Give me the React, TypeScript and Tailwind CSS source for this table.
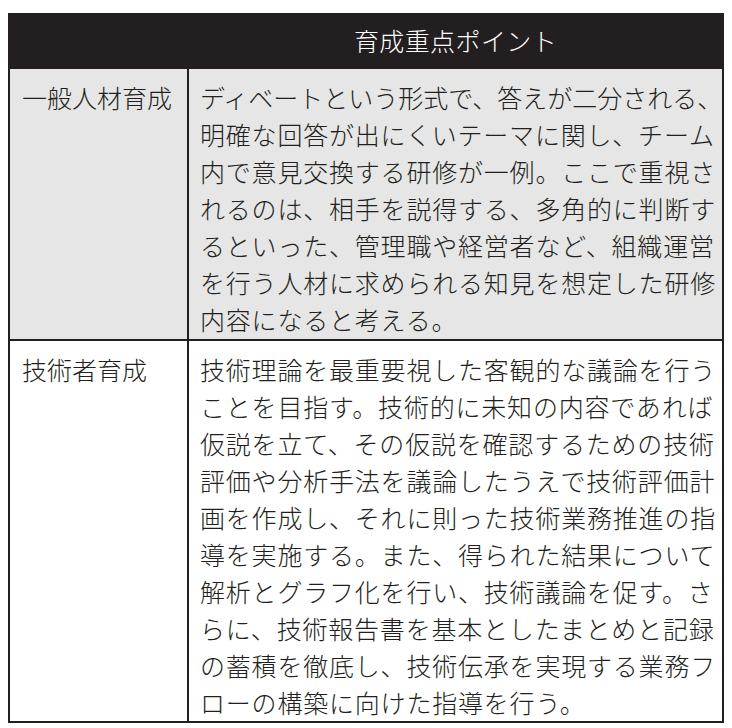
import React from "react";

const row1 = [
  "ディベートという形式で、答えが二分される、",
  "明確な回答が出にくいテーマに関し、チーム",
  "内で意見交換する研修が一例。ここで重視さ",
  "れるのは、相手を説得する、多角的に判断す",
  "るといった、管理職や経営者など、組織運営",
  "を行う人材に求められる知見を想定した研修",
  "内容になると考える。",
];

const row2 = [
  "技術理論を最重要視した客観的な議論を行う",
  "ことを目指す。技術的に未知の内容であれば",
  "仮説を立て、その仮説を確認するための技術",
  "評価や分析手法を議論したうえで技術評価計",
  "画を作成し、それに則った技術業務推進の指",
  "導を実施する。また、得られた結果について",
  "解析とグラフ化を行い、技術議論を促す。さ",
  "らに、技術報告書を基本としたまとめと記録",
  "の蓄積を徹底し、技術伝承を実現する業務フ",
  "ローの構築に向けた指導を行う。",
];

export default function App() {
  return (
    <div
      className="w-[732px] h-[728px] bg-white pt-[13px] pl-[8px] text-[#231f20]"
      style={{ fontFamily: '"Noto Sans CJK JP", "Noto Sans", sans-serif' }}
    >
      <div className="w-[716px]">
        <div className="grid grid-cols-[181px_1fr] h-[56px] bg-[#231f20] text-white">
          <div />
          <div className="flex items-center justify-center text-[25px] font-light tracking-[0.4px] pr-[2px]">
            育成重点ポイント
          </div>
        </div>
        <div className="border-x-2 border-b-2 border-[#231f20]">
          <div className="grid grid-cols-[179px_1fr] bg-[#e6e6e6] border-b-2 border-[#231f20]">
            <div className="border-r-2 border-[#231f20] pl-[12px] pt-[10px] text-[25px] leading-[37px] font-light whitespace-nowrap">
              一般人材育成
            </div>
            <div className="pl-[11px] pt-[10px] pb-[1px] text-[25px] leading-[37px] font-light tracking-[0.8px] whitespace-nowrap">
              {row1.map((l, i) => (
                <div key={i} className={i === 0 ? "tracking-[0px]" : ""}>
                  {l}
                </div>
              ))}
            </div>
          </div>
          <div className="grid grid-cols-[179px_1fr] bg-white">
            <div className="border-r-2 border-[#231f20] pl-[12px] pt-[10px] text-[25px] leading-[37px] font-light whitespace-nowrap">
              技術者育成
            </div>
            <div className="pl-[11px] pt-[10px] text-[25px] leading-[37px] font-light tracking-[0.8px] whitespace-nowrap">
              {row2.map((l, i) => (
                <div key={i}>{l}</div>
              ))}
            </div>
          </div>
        </div>
      </div>
    </div>
  );
}
